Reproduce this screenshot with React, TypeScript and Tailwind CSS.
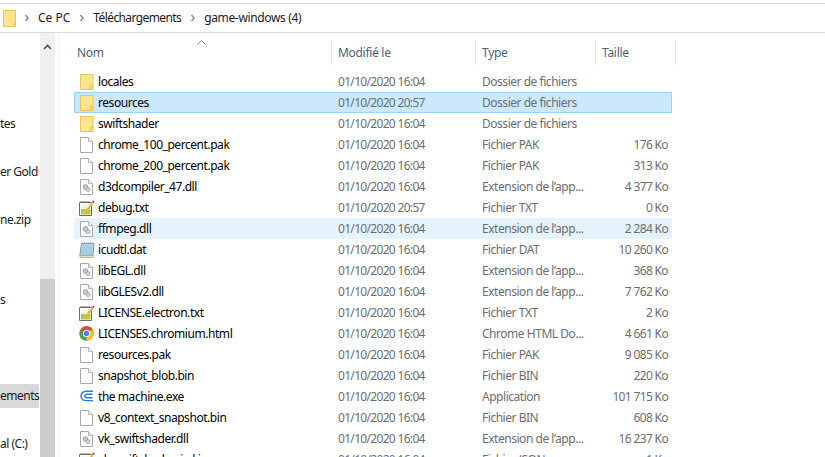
const rows: [string, string, string, string, string][] = [
  ['folder', 'locales', '01/10/2020 16:04', 'Dossier de fichiers', ''],
  ['folder', 'resources', '01/10/2020 20:57', 'Dossier de fichiers', ''],
  ['folder', 'swiftshader', '01/10/2020 16:04', 'Dossier de fichiers', ''],
  ['blank', 'chrome_100_percent.pak', '01/10/2020 16:04', 'Fichier PAK', '176 Ko'],
  ['blank', 'chrome_200_percent.pak', '01/10/2020 16:04', 'Fichier PAK', '313 Ko'],
  ['dll', 'd3dcompiler_47.dll', '01/10/2020 16:04', 'Extension de l’app...', '4 377 Ko'],
  ['txt', 'debug.txt', '01/10/2020 20:57', 'Fichier TXT', '0 Ko'],
  ['dll', 'ffmpeg.dll', '01/10/2020 16:04', 'Extension de l’app...', '2 284 Ko'],
  ['dat', 'icudtl.dat', '01/10/2020 16:04', 'Fichier DAT', '10 260 Ko'],
  ['dll', 'libEGL.dll', '01/10/2020 16:04', 'Extension de l’app...', '368 Ko'],
  ['dll', 'libGLESv2.dll', '01/10/2020 16:04', 'Extension de l’app...', '7 762 Ko'],
  ['txt', 'LICENSE.electron.txt', '01/10/2020 16:04', 'Fichier TXT', '2 Ko'],
  ['chrome', 'LICENSES.chromium.html', '01/10/2020 16:04', 'Chrome HTML Do...', '4 661 Ko'],
  ['blank', 'resources.pak', '01/10/2020 16:04', 'Fichier PAK', '9 085 Ko'],
  ['blank', 'snapshot_blob.bin', '01/10/2020 16:04', 'Fichier BIN', '220 Ko'],
  ['exe', 'the machine.exe', '01/10/2020 16:04', 'Application', '101 715 Ko'],
  ['blank', 'v8_context_snapshot.bin', '01/10/2020 16:04', 'Fichier BIN', '608 Ko'],
  ['dll', 'vk_swiftshader.dll', '01/10/2020 16:04', 'Extension de l’app...', '16 237 Ko'],
  ['txt', 'vk_swiftshader_icd.json', '01/10/2020 16:04', 'Fichier JSON', '1 Ko'],
];

function FolderIcon() {
  return (
    <svg width="14" height="16" viewBox="0 0 14 16">
      <path d="M.5 .5h12.5v15H.5z" fill="#fde48f" stroke="#e8c45c" />
      <path d="M10 11h3v4.5h-3z" fill="#fbd96f" stroke="#e8c45c" strokeWidth="0.8" />
    </svg>
  );
}

function SheetIcon({ children }: { children?: React.ReactNode }) {
  return (
    <svg width="13" height="16" viewBox="0 0 13 16">
      <path d="M.5.5h8l4 4v11H.5z" fill="#fff" stroke="#a9a9a9" />
      <path d="M8.5.5v4h4" fill="#f0f0f0" stroke="#b5b5b5" />
      {children}
    </svg>
  );
}

function DllIcon() {
  return (
    <SheetIcon>
      <circle cx="5.5" cy="8" r="2.3" fill="#c5ccd3" stroke="#8b97a3" strokeWidth="0.9" />
      <circle cx="8" cy="10.5" r="2" fill="#d8dde2" stroke="#939ea9" strokeWidth="0.9" />
    </SheetIcon>
  );
}

function TxtIcon() {
  return (
    <svg width="16" height="16" viewBox="0 0 16 16">
      <path d="M.5 2.5h12v13H.5z" fill="#fff" stroke="#6c6c6c" />
      <path d="M2 2v-1M4 2v-1M6 2v-1M8 2v-1M10 2v-1" stroke="#6c6c6c" />
      <path d="M2 9h9.5v5.5H2z" fill="#a5cf57" />
      <path d="M2 4.5h9.5v4.5H2z" fill="#f0f5dc" />
      <path d="M5 12L12.8 2.5l1.6 1.2L7 13l-2.5 1z" fill="#f0b429" />
      <path d="M13 2l1-1.5 1.5 1-1 1.8z" fill="#b5321f" />
    </svg>
  );
}

function DatIcon() {
  return (
    <svg width="16" height="16" viewBox="0 0 16 16">
      <path d="M3.5 .5v1M5.5 .5v1M7.5 .5v1M9.5 .5v1M11.5 .5v1M13.5 .5v1" stroke="#5f7f92" strokeWidth="0.8" />
      <path d="M2.5 1.5h12.5l-1 12H.8z" fill="#b9d9ea" stroke="#6f9fb8" />
      <path d="M3 4h10.5M2.8 6h10.5M2.6 8h10.5M2.4 10h10.5M2.2 12h10.5" stroke="#8cbcd6" strokeWidth="0.8" />
      <path d="M.8 13.5h13.2l.5 2H1z" fill="#dfe5c8" stroke="#a5ab94" strokeWidth="0.7" />
    </svg>
  );
}

function ChromeIcon() {
  return (
    <svg width="15" height="15" viewBox="0 0 48 48">
      <circle cx="24" cy="24" r="23" fill="#dd4b3e" />
      <path d="M24 24L24 47A23 23 0 0 1 4 35.5L4 12z" fill="#3fa652" />
      <path d="M24 24L4.5 12A23 23 0 0 1 24 1A23 23 0 0 1 44 12z" fill="#dd4b3e" />
      <path d="M24 14h21a23 23 0 0 1-21 33z" fill="#fbc02d" />
      <circle cx="24" cy="24" r="11.5" fill="#fff" />
      <circle cx="24" cy="24" r="8.5" fill="#4285f4" />
    </svg>
  );
}

function ExeIcon() {
  return (
    <svg width="14" height="13" viewBox="0 0 14 13" fill="none" stroke="#1f7fd1" strokeWidth="1.4">
      <path d="M13 1.2H6.5C3 1.2 1 3.4 1 6c0 2.8 2.5 4.6 5.5 4.6H13" />
      <path d="M12.5 4.2H7.2C5.6 4.2 4.8 5 4.8 6s.8 1.8 2.4 1.8h5.3" />
    </svg>
  );
}

function Chevron() {
  return (
    <svg width="4" height="8" viewBox="0 0 4 8" fill="none" stroke="#8a8a8a" strokeWidth="1.4">
      <path d="M.5 1l2.6 3L.5 7" />
    </svg>
  );
}

function RowIcon({ kind }: { kind: string }) {
  if (kind === 'folder') return <FolderIcon />;
  if (kind === 'dll') return <DllIcon />;
  if (kind === 'txt') return <TxtIcon />;
  if (kind === 'dat') return <DatIcon />;
  if (kind === 'chrome') return <ChromeIcon />;
  if (kind === 'exe') return <ExeIcon />;
  return <SheetIcon />;
}

export default function App() {
  return (
    <div className="h-[457px] w-[825px] overflow-hidden bg-white text-[12px] font-['Noto_Sans',sans-serif] text-[#1a1a1a]">
      <div className="mt-[3px] flex h-[30px] items-center border-y border-[#d9d9d9] pl-[3px] tracking-[-0.35px]">
        <svg width="13" height="17" viewBox="0 0 13 17">
          <path d="M.5.5h12v16H.5z" fill="#fde48f" stroke="#e8c45c" />
          <path d="M10 13h2.5v3.5H10z" fill="#f6cf5f" />
        </svg>
        <span className="ml-[9px]"><Chevron /></span>
        <span className="ml-[9px] tracking-[0px]">Ce PC</span>
        <span className="ml-[10px]"><Chevron /></span>
        <span className="ml-[9px] tracking-[-0.6px]">Téléchargements</span>
        <span className="ml-[10px]"><Chevron /></span>
        <span className="ml-[9px]">game-windows (4)</span>
      </div>
      <div className="flex h-[424px]">
        <div className="w-[40px] overflow-hidden whitespace-nowrap pt-[79px] leading-[24px] tracking-[-0.5px]">
          <div>tes</div>
          <div className="mt-[24px]">er Gold</div>
          <div className="mt-[24px]">ne.zip</div>
          <div className="mt-[56px]">s</div>
          <div className="mt-[72px] w-[39px] bg-[#d9d9d9]">ements</div>
          <div className="mt-[24px]">al (C:)</div>
        </div>
        <div className="flex w-[15px] flex-col bg-[#f0f0f0]">
          <div className="flex h-[246px] justify-center pt-[11px]">
            <svg width="9" height="6" viewBox="0 0 9 6" fill="none" stroke="#505050" strokeWidth="1.6">
              <path d="M1 5l3.5-3.5L8 5" />
            </svg>
          </div>
          <div className="flex-1 bg-[#cdcdcd]" />
        </div>
        <div className="ml-[3px] w-[767px] border-l border-[#f0f0f0] pl-[15px]">
          <div className="relative mt-[7px] flex h-[25px] items-center tracking-[-0.3px] text-[#4c607a]">
            <svg className="absolute left-[123px] top-0" width="9" height="5" viewBox="0 0 9 5" fill="none" stroke="#8a8a8a">
              <path d="M.5 4.5l4-4 4 4" />
            </svg>
            <div className="w-[258px] self-stretch border-r border-[#e5e5e5] pl-[3px] leading-[25px]">Nom</div>
            <div className="w-[144px] self-stretch border-r border-[#e5e5e5] pl-[6px] leading-[25px]">Modifié le</div>
            <div className="w-[120px] self-stretch border-r border-[#e5e5e5] pl-[6px] leading-[25px]">Type</div>
            <div className="w-[80px] self-stretch border-r border-[#e5e5e5] pl-[6px] leading-[25px]">Taille</div>
          </div>
          <div className="mt-[6px]">
            {rows.map(([kind, name, date, type, size]) => (
              <div
                key={name}
                className={
                  'flex h-[21px] w-[598px] items-center border ' +
                  (name === 'resources'
                    ? 'border-[#99d1ff] bg-[#cce8ff]'
                    : name === 'ffmpeg.dll'
                      ? 'border-[#e5f3ff] bg-[#e5f3ff]'
                      : 'border-transparent')
                }
              >
                <div className="flex w-[23px] shrink-0 justify-center">
                  <RowIcon kind={kind} />
                </div>
                <div className="w-[240px] shrink-0 whitespace-nowrap tracking-[-0.45px] text-[#000]">{name}</div>
                <div className="w-[144px] shrink-0 whitespace-nowrap tracking-[-0.68px] text-[#6d6d6d]">{date}</div>
                <div className="w-[113px] shrink-0 whitespace-nowrap tracking-[-0.47px] text-[#6d6d6d]">{type}</div>
                <div className="w-[73px] shrink-0 whitespace-nowrap text-right tracking-[-0.65px] text-[#6d6d6d]">{size}</div>
              </div>
            ))}
          </div>
        </div>
      </div>
    </div>
  );
}
